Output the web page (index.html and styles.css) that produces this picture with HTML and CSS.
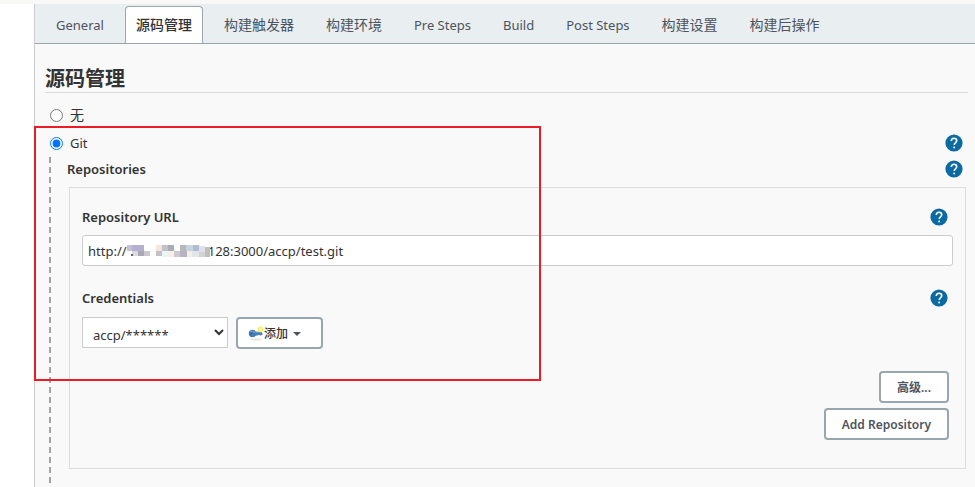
FILE: index.html
```html
<!DOCTYPE html>
<html lang="zh-CN">
<head>
    <meta charset="UTF-8" />
    <meta name="viewport" content="width=device-width, initial-scale=1.0" />
    <title>源码管理</title>
    <link rel="stylesheet" href="styles.css">
</head>
<body>

    <!-- Shared icon -->
    <svg class="sprite" aria-hidden="true">
        <symbol id="help" viewBox="0 0 18 18">
            <circle cx="9" cy="9" r="8.6" fill="#0b6aa2" />
            <path d="M6.3 7.1C6.3 5.4 7.4 4.3 9 4.3s2.7 1 2.7 2.5c0 1.900-2.500 2.100-2.500 4.300" fill="none" stroke="#fff" stroke-width="1.600" />
            <rect x="8.300" y="12.600" width="1.700" height="1.700" fill="#fff" />
        </symbol>
    </svg>

    <main>
        <nav class="tabs">
            <a href="#general" class="tab latin">General</a>
            <a href="#scm" class="tab active">源码管理</a>
            <a href="#triggers" class="tab">构建触发器</a>
            <a href="#env" class="tab">构建环境</a>
            <a href="#pre" class="tab latin">Pre Steps</a>
            <a href="#build" class="tab latin">Build</a>
            <a href="#post" class="tab latin">Post Steps</a>
            <a href="#settings" class="tab">构建设置</a>
            <a href="#after" class="tab">构建后操作</a>
        </nav>

        <h2 id="scm">源码管理</h2>

        <form class="scm">
            <div class="row">
                <input type="radio" name="scm" id="scmNone" />
                <label for="scmNone">无</label>
            </div>

            <div class="git">
                <div class="row">
                    <input type="radio" name="scm" id="scmGit" checked />
                    <label for="scmGit" class="latin">Git</label>
                    <a href="#help" class="help" aria-label="Git"><svg><use href="#help" /></svg></a>
                </div>

                <div class="git-body">
                    <div class="field-head">
                        <span class="title">Repositories</span>
                        <a href="#help" class="help" aria-label="Repositories"><svg><use href="#help" /></svg></a>
                    </div>

                    <div class="repo-box">
                        <div class="field-head">
                            <label for="repoUrl" class="title">Repository URL</label>
                            <a href="#help" class="help" aria-label="Repository URL"><svg><use href="#help" /></svg></a>
                        </div>
                        <div class="url-field">
                            <input type="text" id="repoUrl" value="http://                        128:3000/accp/test.git" />
                            <!-- hidden part of the address -->
                            <svg class="mosaic" viewBox="0 0 84 12" shape-rendering="crispEdges" aria-hidden="true">
                                <path fill="#c6c0d0" d="M0 0h5v6h-5z" />
                                <path fill="#b5b0ce" d="M5 0h12v6h-12z" />
                                <path fill="#dcdbe2" d="M5 6h6v5h-6z" />
                                <path fill="#a9a9b5" d="M11 6h6v5h-6z" />
                                <path fill="#c9c8ce" d="M17 6h6v5h-6z" />
                                <path fill="#656565" d="M4 9h2v2h-2z" />
                                <path fill="#f3e6dc" d="M29 0h6v6h-6z" />
                                <path fill="#c6bfc5" d="M35 0h6v6h-6zM29 6h6v5h-6z" />
                                <path fill="#a6adb5" d="M41 0h6v6h-6z" />
                                <path fill="#e8f6fa" d="M35 6h6v6h-6z" />
                                <path fill="#f7eee8" d="M41 6h6v6h-6zM60 6h5v6h-5z" />
                                <path fill="#cec9d1" d="M47 6h6v6h-6z" />
                                <path fill="#b7b9b8" d="M53 0h6v6h-6z" />
                                <path fill="#b8b3c4" d="M53 6h7v6h-7z" />
                                <path fill="#c8d3e0" d="M59 0h7v6h-7z" />
                                <path fill="#aebdcf" d="M66 0h6v6h-6z" />
                                <path fill="#e4e5e8" d="M65 6h7v6h-7z" />
                                <path fill="#dfdfef" d="M72 1h6v6h-6z" />
                                <path fill="#d2d3d6" d="M72 7h6v5h-6z" />
                                <path fill="#bdc0b2" d="M78 2h5v10h-5z" />
                            </svg>
                        </div>

                        <div class="field-head">
                            <label for="credentials" class="title">Credentials</label>
                            <a href="#help" class="help" aria-label="Credentials"><svg><use href="#help" /></svg></a>
                        </div>
                        <div class="credentials">
                            <select id="credentials">
                                <option>accp/******</option>
                            </select>
                            <button type="button" class="add">
                                <svg class="key" viewBox="0 0 16 16" aria-hidden="true">
                                    <ellipse cx="8" cy="13.500" rx="6" ry="1" fill="#e4e4e4" />
                                    <path d="M6 6h7l1.500 1v1.500l-1.500 1h-1l-1-1-1 1h-4z" fill="#4a7dbb" />
                                    <circle cx="4.500" cy="7.500" r="3.700" fill="#4779b5" />
                                    <path d="M2 6q2-2 4 0h7" fill="none" stroke="#83a9d5" />
                                    <circle cx="2.800" cy="7.500" r="1" fill="#315d92" />
                                    <circle cx="12.500" cy="3.500" r="2" fill="#fff" stroke="#f8ee45" stroke-width="1.500" />
                                </svg>添加<span class="caret"></span>
                            </button>
                        </div>

                        <div class="actions">
                            <button type="button">高级...</button>
                            <button type="button">Add Repository</button>
                        </div>
                    </div>
                </div>

                <div class="highlight"></div>
            </div>
        </form>
    </main>

</body>
</html>
```
FILE: styles.css
```css
* {
    box-sizing: border-box;
}

body {
    margin: 0;
    min-height: 100vh;
    display: flex;
    background-color: #fff;
    border-top: 4px solid #f8f8f6;
    padding-left: 34px;
    font-family: "Noto Sans", "Noto Sans CJK SC", sans-serif;
    font-size: 14px;
    line-height: 20px;
    color: #333;
}

.sprite {
    position: absolute;
    width: 0;
    height: 0;
}

main {
    flex: 1;
    min-width: 0;
    display: flex;
    flex-direction: column;
    background-color: #f9f9f9;
    border-left: 1px solid #c8cccf;
}

.latin {
    font-size: 13px;
}

/* Tabs */
.tabs {
    display: flex;
    gap: 10px;
    height: 40px;
    padding: 2px 10px 0;
    background-color: #e9eef1;
    border-bottom: 1px solid #98a6ad;
    white-space: nowrap;
}

.tab {
    padding: 8px 10px;
    border: 1px solid transparent;
    border-bottom: none;
    color: #4d545d;
    text-decoration: none;
}

.tab.active {
    background-color: #fff;
    border-color: #98a6ad;
    border-radius: 4px 4px 0 0;
    color: #333;
    font-weight: 500;
}

h2 {
    margin: 20px 7px 8px 10px;
    padding-top: 1px;
    border-bottom: 1px solid #dcdcdc;
    font-size: 20px;
    line-height: 27px;
    font-weight: bold;
}

/* Form */
.scm,
.git,
.git-body {
    flex: 1;
    display: flex;
    flex-direction: column;
}

.row {
    display: flex;
    align-items: center;
    gap: 7px;
    height: 28px;
    padding: 0 12px 0 15px;
}

.row input {
    margin: 0;
}

.git {
    position: relative;
}

.git-body {
    margin: 0 9px 0 14px;
    padding-left: 18px;
    background: repeating-linear-gradient(#a3a3a3 0 6px, transparent 6px 10px) left / 2px 100% no-repeat;
}

.field-head {
    display: flex;
    align-items: center;
    justify-content: space-between;
    height: 24px;
}

.git-body > .field-head {
    padding-right: 3px;
}

.title {
    font-size: 13px;
    font-weight: 600;
}

.help {
    display: block;
    width: 18px;
    height: 18px;
    margin-left: auto;
}

.help svg {
    display: block;
    width: 100%;
    height: 100%;
}

.repo-box {
    margin: 6px 0 18px 2px;
    padding: 17px 12px 28px;
    border: 1px solid #ddd;
}

.repo-box .help {
    margin-right: 5px;
}

.url-field {
    position: relative;
    margin: 6px 0 20px;
}

.url-field input {
    display: block;
    width: 100%;
    height: 31px;
    padding: 0 5px;
    border: 1px solid #ccc;
    border-radius: 3px;
    background-color: #fff;
    color: #333;
    font: inherit;
    font-size: 13px;
}

.mosaic {
    position: absolute;
    left: 45px;
    top: 10px;
    width: 84px;
    height: 12px;
}

.credentials {
    display: flex;
    gap: 8px;
    margin-top: 7px;
}

select {
    width: 146px;
    height: 31px;
    padding: 5px 6px 0;
    border: 1px solid #ccc;
    border-radius: 0;
    background-color: #fff;
    color: #333;
    font: inherit;
    font-size: 13px;
}

button {
    height: 32px;
    padding: 1px 16px 0;
    border: 2px solid #98a6ad;
    border-radius: 4px;
    background-color: #fff;
    color: #4d545d;
    font: inherit;
    font-size: 12px;
    font-weight: 600;
    cursor: pointer;
}

.add {
    display: flex;
    align-items: center;
    padding: 1px 20px 0 10px;
    color: #333;
    font-weight: 500;
}

.key {
    width: 16px;
    height: 16px;
}

.caret {
    margin-left: 5px;
    border: 4px solid transparent;
    border-top-color: #4d545d;
    border-bottom: none;
}

.actions {
    display: flex;
    flex-direction: column;
    align-items: flex-end;
    gap: 5px;
    margin: 22px 4px 0;
}

/* Red frame over the Git settings */
.highlight {
    position: absolute;
    left: -1px;
    top: -3px;
    width: 507px;
    height: 255px;
    border: 2px solid #ed1c24;
    pointer-events: none;
}
```
